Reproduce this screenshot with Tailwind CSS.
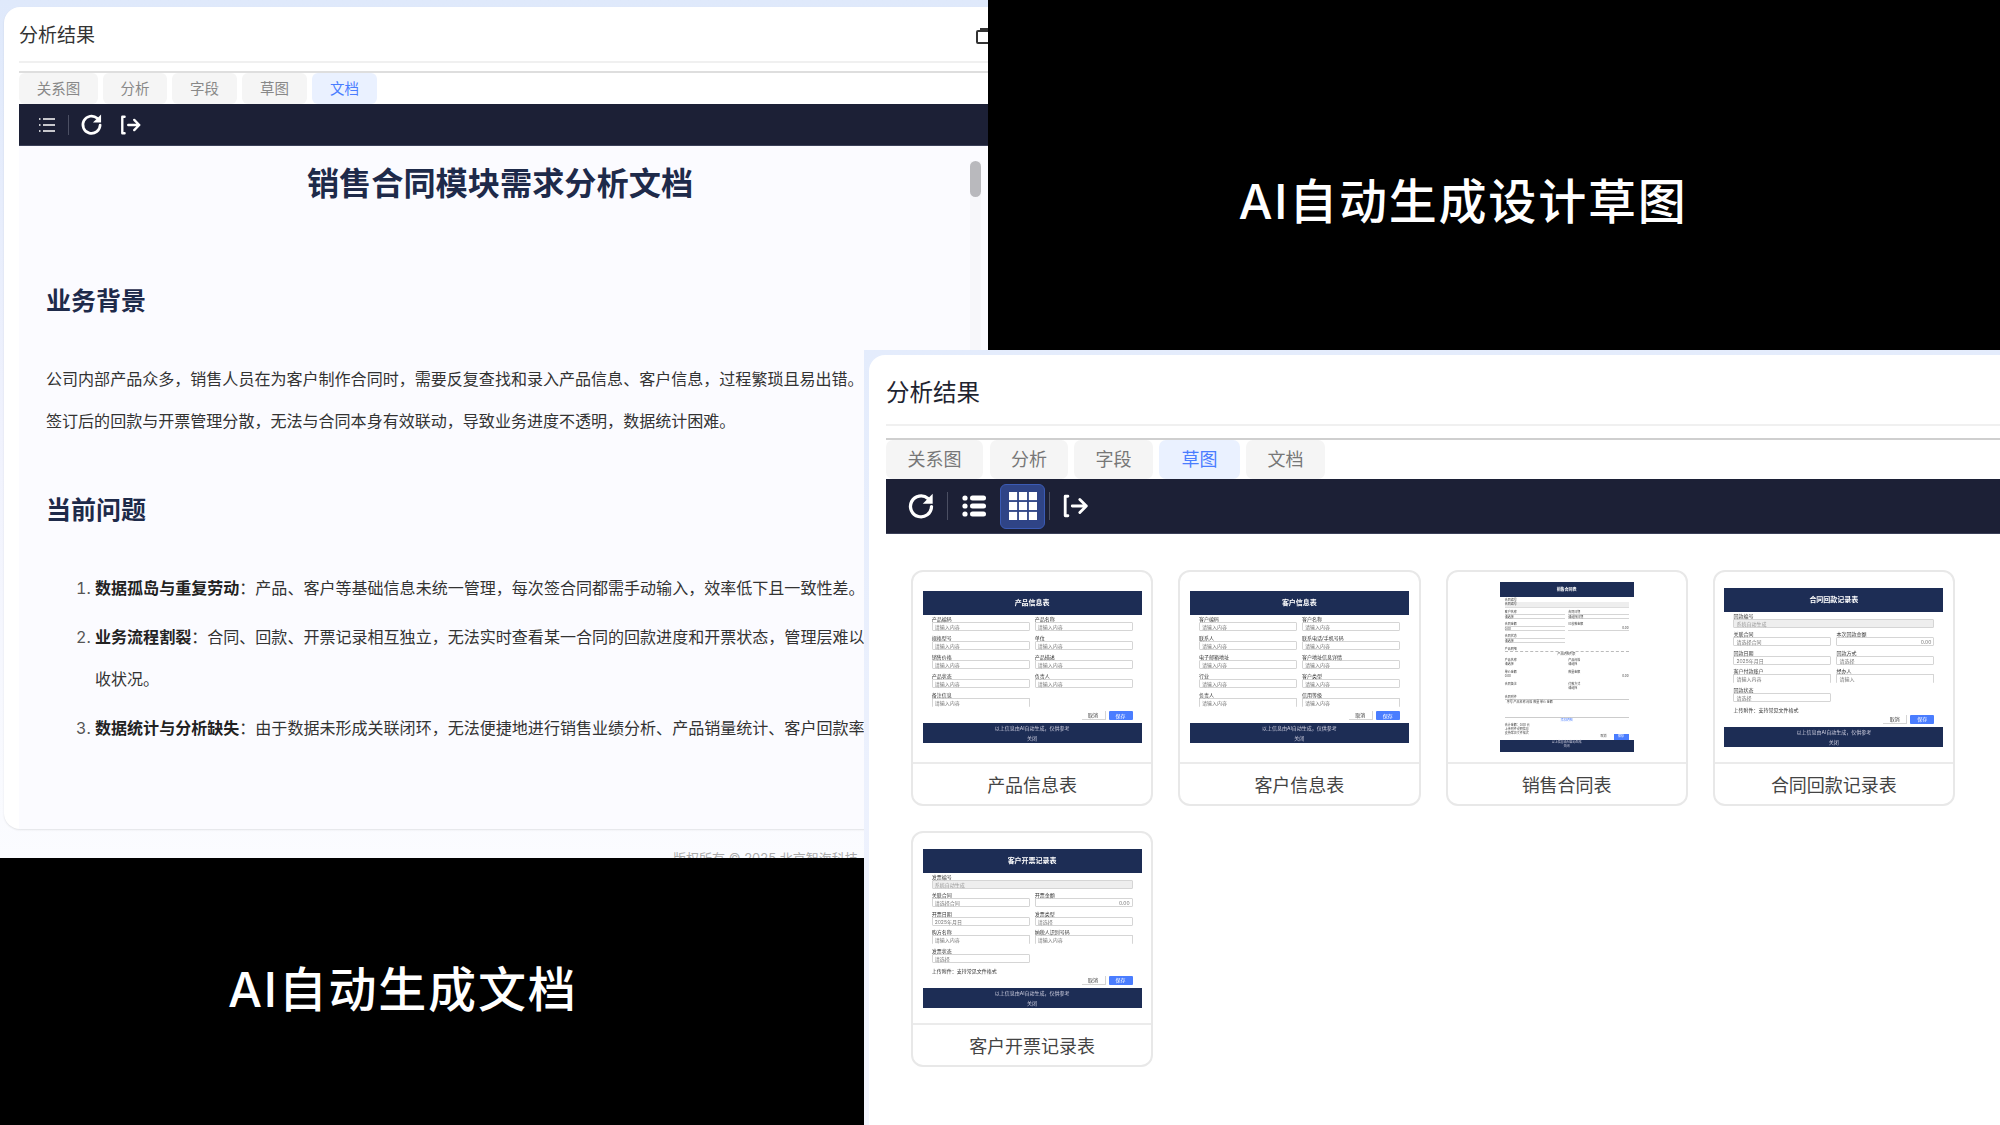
<!DOCTYPE html>
<html lang="zh-CN">
<head>
<meta charset="utf-8">
<title>AI</title>
<script src="https://cdn.jsdelivr.net/npm/@tailwindcss/browser@4"></script>
</head>
<body class="m-0 bg-black">
<div class="relative w-[2000px] h-[1125px] overflow-hidden bg-black font-['Inter','Noto_Sans_CJK_SC',sans-serif]">

<!-- left window -->
<section class="absolute left-0 top-0 w-[988px] h-[858px] overflow-hidden bg-linear-to-b from-[#dfe9fb] via-[#f0f2fd] to-[#fbfcff] pt-[7px] pl-[4px]">
  <div class="h-[822px] w-[1000px] rounded-[16px] bg-white pl-[15px] shadow-[0_1px_2px_rgba(0,0,0,0.1)] flex flex-col">
    <div class="h-[56px] border-b-2 border-[#f0f0f0] flex items-center text-[19px] text-[#333] shrink-0 relative">
      <span class="mt-[5px]">分析结果</span>
      <svg class="absolute left-[957px] top-[21px]" width="14" height="16" viewBox="0 0 14 16" fill="none" stroke="#333" stroke-width="2"><rect x="1" y="3" width="12" height="12" rx="1"/><path d="M4 1h9"/></svg>
    </div>
    <div class="mt-[8px] border-t-2 border-[#dedede] flex gap-[5px] h-[33px] text-[14.5px] text-[#888] shrink-0">
      <div class="w-[79px] h-[31px] flex items-center justify-center bg-[#f5f5f5] rounded-[6px]">关系图</div>
      <div class="w-[64px] h-[31px] flex items-center justify-center bg-[#f5f5f5] rounded-[6px]">分析</div>
      <div class="w-[65px] h-[31px] flex items-center justify-center bg-[#f5f5f5] rounded-[6px]">字段</div>
      <div class="w-[65px] h-[31px] flex items-center justify-center bg-[#f5f5f5] rounded-[6px]">草图</div>
      <div class="w-[65px] h-[31px] flex items-center justify-center bg-[#eaf1ff] rounded-[6px] text-[#4a7dff]">文档</div>
    </div>
    <div class="h-[42px] bg-[#1c2036] flex items-center shrink-0 border-b border-[#3b4058]">
      <svg class="ml-[19px]" width="18" height="18" viewBox="0 0 18 18" fill="none" stroke="#fff" stroke-width="1.6"><path d="M5 3h12M5 9h12M5 15h12M1 3h1.5M1 9h1.5M1 15h1.5"/></svg>
      <span class="ml-[12px] w-px h-[20px] bg-[#4b4f63]"></span>
      <svg class="ml-[11px]" width="23" height="23" viewBox="0 0 24 24" fill="none" stroke="#fff" stroke-width="2.8" stroke-linecap="round"><path d="M21 12.5A9 9 0 1 1 18 5.6"/><path d="M22 1.5v8.5h-8.5z" fill="#fff" stroke="none"/></svg>
      <svg class="ml-[17px]" width="22" height="22" viewBox="0 0 24 24" fill="none" stroke="#fff" stroke-width="2.6" stroke-linecap="round" stroke-linejoin="round"><path d="M5 3H2.5v18H5"/><path d="M9 12h12M15.5 6.5L21 12l-5.500 5.500"/></svg>
    </div>
    <div class="relative flex-1 bg-[#fbfbff] pl-[27px] text-[16.05px] text-[#333] overflow-hidden">
      <div class="absolute left-[951px] top-[15px] w-[11px] h-[574px] bg-[#f7f7fa]"><div class="h-[36px] rounded-full bg-[#b9b9bd]"></div></div>
      <h1 class="w-[962px] -ml-[27px] mt-[16px] h-[44px] leading-[44px] text-center text-[32.2px] font-bold text-[#1e2a4a] whitespace-nowrap">销售合同模块需求分析文档</h1>
      <h2 class="mt-[77px] h-[36px] leading-[36px] text-[25px] font-bold text-[#1e2a4a]">业务背景</h2>
      <p class="mt-[39px] leading-[42px] whitespace-nowrap">公司内部产品众多，销售人员在为客户制作合同时，需要反复查找和录入产品信息、客户信息，过程繁琐且易出错。</p>
      <p class="leading-[42px] whitespace-nowrap">签订后的回款与开票管理分散，无法与合同本身有效联动，导致业务进度不透明，数据统计困难。</p>
      <h2 class="mt-[50px] h-[36px] leading-[36px] text-[25px] font-bold text-[#1e2a4a]">当前问题</h2>
      <ol class="mt-[39px] pl-[49px] list-decimal whitespace-nowrap marker:text-[#555]">
        <li class="leading-[42px]"><strong class="text-[#222]">数据孤岛与重复劳动</strong>：产品、客户等基础信息未统一管理，每次签合同都需手动输入，效率低下且一致性差。</li>
        <li class="mt-[7px] leading-[42px]"><strong class="text-[#222]">业务流程割裂</strong>：合同、回款、开票记录相互独立，无法实时查看某一合同的回款进度和开票状态，管理层难以掌握整体回<br>收状况。</li>
        <li class="mt-[7px] leading-[42px]"><strong class="text-[#222]">数据统计与分析缺失</strong>：由于数据未形成关联闭环，无法便捷地进行销售业绩分析、产品销量统计、客户回款率等</li>
      </ol>
    </div>
  </div>
  <div class="absolute left-[673px] top-[853px] text-[13px] leading-[10px] text-[#aaa] whitespace-nowrap">版权所有 © 2025 北京智海科技</div>
</section>

<!-- top right black caption -->
<div class="absolute left-[988px] top-0 w-[1012px] h-[350px] bg-black flex items-center justify-center text-white text-[48px] font-medium tracking-[1.8px] pt-[54px] pr-[62px]">
  <span>AI自动生成设计草图</span>
</div>

<!-- bottom left black caption -->
<div class="absolute left-0 top-[858px] w-[864px] h-[267px] bg-black text-white text-[48px] font-medium tracking-[1.8px] flex items-center pl-[228px] pb-[4px]">
  <span class="whitespace-nowrap">AI自动生成文档</span>
</div>

<!-- right window -->
<section class="absolute left-[864px] top-[350px] w-[1136px] h-[775px] bg-linear-to-b from-[#e4ecfc] to-[#f3f5fe] pt-[5px] pl-[5px]">
  <div class="h-[790px] w-[1160px] rounded-[16px] bg-white pl-[17px] flex flex-col">
    <div class="h-[71px] border-b-2 border-[#f0f0f0] flex items-center text-[23.5px] text-[#1f2430] shrink-0"><span class="mt-[7px]">分析结果</span></div>
    <div class="mt-[12px] border-t-2 border-[#cfcfcf] flex h-[41px] text-[18px] text-[#777] shrink-0">
      <div class="w-[97px] h-[39px] ml-0 flex items-center justify-center bg-[#f5f5f5] rounded-[7px]">关系图</div>
      <div class="w-[78px] h-[39px] ml-[7px] flex items-center justify-center bg-[#f5f5f5] rounded-[7px]">分析</div>
      <div class="w-[79px] h-[39px] ml-[6px] flex items-center justify-center bg-[#f5f5f5] rounded-[7px]">字段</div>
      <div class="w-[81px] h-[39px] ml-[6px] flex items-center justify-center bg-[#eaf1ff] rounded-[7px] text-[#4a7dff]">草图</div>
      <div class="w-[79px] h-[39px] ml-[6px] flex items-center justify-center bg-[#f5f5f5] rounded-[7px]">文档</div>
    </div>
    <div class="h-[55px] bg-[#1c2036] flex items-center shrink-0 border-b border-[#3b4058]">
      <svg class="ml-[21px]" width="28" height="28" viewBox="0 0 24 24" fill="none" stroke="#fff" stroke-width="2.8" stroke-linecap="round"><path d="M21 12.5A9 9 0 1 1 18 5.6"/><path d="M22 1.500v8.500h-8.500z" fill="#fff" stroke="none"/></svg>
      <span class="ml-[12px] w-px h-[28px] bg-[#4b4f63]"></span>
      <svg class="ml-[13px]" width="26" height="24" viewBox="0 0 26 24" fill="#fff"><circle cx="4" cy="4" r="2.6"/><circle cx="4" cy="12" r="2.6"/><circle cx="4" cy="20" r="2.6"/><rect x="9" y="1.500" width="16" height="5" rx="2.500"/><rect x="9" y="9.500" width="16" height="5" rx="2.500"/><rect x="9" y="17.500" width="16" height="5" rx="2.500"/></svg>
      <div class="ml-[13px] w-[45px] h-[45px] rounded-[6px] bg-[#2f4486] border border-[#3b5bb5] flex items-center justify-center">
        <svg width="28" height="28" viewBox="0 0 29 29" fill="#fff"><rect x="0" y="0" width="8.400" height="8.400"/><rect x="10.300" y="0" width="8.400" height="8.400"/><rect x="20.600" y="0" width="8.400" height="8.400"/><rect x="0" y="10.300" width="8.400" height="8.400"/><rect x="10.300" y="10.300" width="8.400" height="8.400"/><rect x="20.600" y="10.300" width="8.400" height="8.400"/><rect x="0" y="20.600" width="8.400" height="8.400"/><rect x="10.300" y="20.600" width="8.400" height="8.400"/><rect x="20.600" y="20.600" width="8.400" height="8.400"/></svg>
      </div>
      <span class="ml-[4px] w-px h-[28px] bg-[#4b4f63]"></span>
      <svg class="ml-[12px]" width="27" height="26" viewBox="0 0 24 24" fill="none" stroke="#fff" stroke-width="2.6" stroke-linecap="round" stroke-linejoin="round"><path d="M5 3H2.500v18H5"/><path d="M9 12h13M16 6l6 6-6 6"/></svg>
    </div>

    <div class="ml-[25px] mt-[36px] w-[1044px] grid grid-cols-4 gap-x-[25px] gap-y-[25px] text-[18px] text-[#444]">

      <!-- card 1 -->
      <article class="h-[236px] rounded-[12px] border-2 border-[#e8e8e8] bg-white flex flex-col overflow-hidden">
        <div class="h-[192px] border-b-2 border-[#ebebeb] flex items-center justify-center">
          <div class="w-[219px] h-[152px] flex flex-col text-[5px] leading-[6px] text-[#333] blur-[0.35px]">
            <div class="h-[24px] bg-[#1d2d55] text-white flex items-center justify-center text-[7px] font-bold">产品信息表</div>
            <div class="grid grid-cols-2 gap-x-[5px] px-[9px] pt-[1px] flex-1">
              <div class="h-[18.6px]">产品编码<div class="h-[9px] border-[#d5d5d5] border rounded-[1px] pl-[2px] leading-[8px] text-[#777]">请输入内容</div></div>
              <div class="h-[18.6px]">产品名称<div class="h-[9px] border-[#d5d5d5] border rounded-[1px] pl-[2px] leading-[8px] text-[#777]">请输入内容</div></div>
              <div class="h-[18.6px]">规格型号<div class="h-[9px] border-[#d5d5d5] border rounded-[1px] pl-[2px] leading-[8px] text-[#777]">请输入内容</div></div>
              <div class="h-[18.6px]">单位<div class="h-[9px] border-[#d5d5d5] border rounded-[1px] pl-[2px] leading-[8px] text-[#777]">请输入内容</div></div>
              <div class="h-[18.6px]">销售价格<div class="h-[9px] border-[#d5d5d5] border rounded-[1px] pl-[2px] leading-[8px] text-[#777]">请输入内容</div></div>
              <div class="h-[18.6px]">产品描述<div class="h-[9px] border-[#d5d5d5] border rounded-[1px] pl-[2px] leading-[8px] text-[#777]">请输入内容</div></div>
              <div class="h-[18.6px]">产品状态<div class="h-[9px] border-[#d5d5d5] border rounded-[1px] pl-[2px] leading-[8px] text-[#777]">请输入内容</div></div>
              <div class="h-[18.6px]">负责人<div class="h-[9px] border-[#d5d5d5] border rounded-[1px] pl-[2px] leading-[8px] text-[#777]">请输入内容</div></div>
              <div class="h-[18.6px]">备注信息<div class="h-[9px] border-[#d5d5d5] border border-b-0 rounded-[1px] pl-[2px] leading-[8px] text-[#777]">请输入内容</div></div>
            </div>
            <div class="flex justify-end gap-[3px] px-[9px] h-[12px]">
              <div class="w-[24px] h-[9px] border-r border-b border-[#d5d5d5] flex items-center justify-center">取消</div>
              <div class="w-[24px] h-[9px] bg-[#4a7dff] rounded-[1px] text-white flex items-center justify-center">保存</div>
            </div>
            <div class="h-[20px] bg-[#1d2d55] text-[#ccd] text-center flex flex-col justify-around">
              <div>以上信息由AI自动生成，仅供参考</div><div>关闭</div>
            </div>
          </div>
        </div>
        <div class="flex-1 flex items-center justify-center pt-[3px]">产品信息表</div>
      </article>

      <!-- card 2 -->
      <article class="h-[236px] rounded-[12px] border-2 border-[#e8e8e8] bg-white flex flex-col overflow-hidden">
        <div class="h-[192px] border-b-2 border-[#ebebeb] flex items-center justify-center">
          <div class="w-[219px] h-[152px] flex flex-col text-[5px] leading-[6px] text-[#333] blur-[0.35px]">
            <div class="h-[24px] bg-[#1d2d55] text-white flex items-center justify-center text-[7px] font-bold">客户信息表</div>
            <div class="grid grid-cols-2 gap-x-[5px] px-[9px] pt-[1px] flex-1">
              <div class="h-[18.6px]">客户编码<div class="h-[9px] border-[#d5d5d5] border rounded-[1px] pl-[2px] leading-[8px] text-[#777]">请输入内容</div></div>
              <div class="h-[18.6px]">客户名称<div class="h-[9px] border-[#d5d5d5] border rounded-[1px] pl-[2px] leading-[8px] text-[#777]">请输入内容</div></div>
              <div class="h-[18.6px]">联系人<div class="h-[9px] border-[#d5d5d5] border rounded-[1px] pl-[2px] leading-[8px] text-[#777]">请输入内容</div></div>
              <div class="h-[18.6px]">联系电话/手机号码<div class="h-[9px] border-[#d5d5d5] border rounded-[1px] pl-[2px] leading-[8px] text-[#777]">请输入内容</div></div>
              <div class="h-[18.6px]">电子邮箱地址<div class="h-[9px] border-[#d5d5d5] border rounded-[1px] pl-[2px] leading-[8px] text-[#777]">请输入内容</div></div>
              <div class="h-[18.6px]">客户地址信息详情<div class="h-[9px] border-[#d5d5d5] border rounded-[1px] pl-[2px] leading-[8px] text-[#777]">请输入内容</div></div>
              <div class="h-[18.6px]">行业<div class="h-[9px] border-[#d5d5d5] border rounded-[1px] pl-[2px] leading-[8px] text-[#777]">请输入内容</div></div>
              <div class="h-[18.6px]">客户类型<div class="h-[9px] border-[#d5d5d5] border rounded-[1px] pl-[2px] leading-[8px] text-[#777]">请输入内容</div></div>
              <div class="h-[18.6px]">负责人<div class="h-[9px] border-[#d5d5d5] border border-b-0 rounded-[1px] pl-[2px] leading-[8px] text-[#777]">请输入内容</div></div>
              <div class="h-[18.6px]">信用等级<div class="h-[9px] border-[#d5d5d5] border border-b-0 rounded-[1px] pl-[2px] leading-[8px] text-[#777]">请输入内容</div></div>
            </div>
            <div class="flex justify-end gap-[3px] px-[9px] h-[12px]">
              <div class="w-[24px] h-[9px] border-r border-b border-[#d5d5d5] flex items-center justify-center">取消</div>
              <div class="w-[24px] h-[9px] bg-[#4a7dff] rounded-[1px] text-white flex items-center justify-center">保存</div>
            </div>
            <div class="h-[20px] bg-[#1d2d55] text-[#ccd] text-center flex flex-col justify-around">
              <div>以上信息由AI自动生成，仅供参考</div><div>关闭</div>
            </div>
          </div>
        </div>
        <div class="flex-1 flex items-center justify-center pt-[3px]">客户信息表</div>
      </article>

      <!-- card 3 -->
      <article class="h-[236px] rounded-[12px] border-2 border-[#e8e8e8] bg-white flex flex-col overflow-hidden">
        <div class="h-[192px] border-b-2 border-[#ebebeb] flex items-center justify-center">
          <div class="w-[134px] h-[170px] flex flex-col text-[3px] leading-[4px] text-[#444] blur-[0.35px]">
            <div class="h-[15px] bg-[#1d2d55] text-white flex items-center justify-center text-[4px] font-bold">销售合同表</div>
            <div class="px-[5px] pt-[1px] flex-1">
              <div>合同编号<div class="h-[6px] bg-[#eee] border-b border-[#ddd]">合同编号</div></div>
              <div class="grid grid-cols-2 gap-x-[3px] mt-[2px]">
                <div class="h-[12px]">客户名称<div class="h-[5px] border-y border-[#d5d5d5]">请选择</div></div>
                <div class="h-[12px]">合同日期<div class="h-[5px] border-y border-[#d5d5d5]">请选择日期</div></div>
                <div class="h-[12px]">合同金额<div class="h-[5px] border-y border-[#d5d5d5]">0.00</div></div>
                <div class="h-[12px]">已收款金额<div class="h-[5px] border-b border-[#d5d5d5] text-right">0.00</div></div>
                <div class="h-[12px]">合同状态<div class="h-[5px] border-y border-[#d5d5d5]">请选择</div></div>
              </div>
              <div class="mt-[1px]">产品明细<div class="h-0 border-t border-dashed border-[#bbb]"></div></div>
              <div class="text-center">产品明细列表</div>
              <div class="grid grid-cols-2 gap-x-[3px] mt-[2px]">
                <div class="h-[12px]">产品名称<div>请选择</div></div>
                <div class="h-[12px]">产品规格<div>请选择</div></div>
                <div class="h-[12px]">单价金额<div>0.00</div></div>
                <div class="h-[12px]">数量金额<div class="text-right">0.00</div></div>
                <div class="h-[12px]">合同备注</div>
                <div class="h-[12px]">付款方式<div>请选择</div></div>
              </div>
              <div class="mt-[1px]">合同附件</div>
              <div class="h-[19px] border-y border-[#ccc]"><span class="pl-[2px]">序号 产品名称 规格 数量 单价 金额</span></div>
              <div class="text-center text-[#4a7dff]">添加明细</div>
              <div class="mt-[1px]">合计金额：0.00 元<br>上传附件说明信息<br>支持常见文件格式</div>
              <div class="flex justify-end gap-[3px] -mt-[1px]">
                <div class="w-[14px] h-[5px] text-center">取消</div>
                <div class="w-[15px] h-[6px] bg-[#4a7dff] text-white text-center">保存</div>
              </div>
            </div>
            <div class="h-[12px] bg-[#1d2d55] text-[#ccd] text-center">以上信息由AI自动生成<br>关闭</div>
          </div>
        </div>
        <div class="flex-1 flex items-center justify-center pt-[3px]">销售合同表</div>
      </article>

      <!-- card 4 -->
      <article class="h-[236px] rounded-[12px] border-2 border-[#e8e8e8] bg-white flex flex-col overflow-hidden">
        <div class="h-[192px] border-b-2 border-[#ebebeb] flex items-center justify-center">
          <div class="w-[219px] h-[159px] flex flex-col text-[5px] leading-[6px] text-[#333] blur-[0.35px]">
            <div class="h-[24px] bg-[#1d2d55] text-white flex items-center justify-center text-[7px] font-bold">合同回款记录表</div>
            <div class="px-[9px] pt-[1px] flex-1">
              <div class="h-[18.6px]">回款编号<div class="h-[9px] bg-[#eee] border border-[#d5d5d5] rounded-[1px] pl-[2px] leading-[8px] text-[#999]">系统自动生成</div></div>
              <div class="grid grid-cols-2 gap-x-[5px]">
                <div class="h-[18.6px]">关联合同<div class="h-[9px] border-[#d5d5d5] border rounded-[1px] pl-[2px] leading-[8px] text-[#777]">请选择合同</div></div>
                <div class="h-[18.6px]">本次回款金额<div class="h-[9px] border-[#d5d5d5] border rounded-[1px] pr-[2px] leading-[8px] text-[#777] text-right">0.00</div></div>
                <div class="h-[18.6px]">回款日期<div class="h-[9px] border-[#d5d5d5] border rounded-[1px] pl-[2px] leading-[8px] text-[#777]">2025年月日</div></div>
                <div class="h-[18.6px]">回款方式<div class="h-[9px] border-[#d5d5d5] border rounded-[1px] pl-[2px] leading-[8px] text-[#777]">请选择</div></div>
                <div class="h-[18.6px]">客户付款账户<div class="h-[9px] border-[#d5d5d5] border border-b-0 rounded-[1px] pl-[2px] leading-[8px] text-[#777]">请输入内容</div></div>
                <div class="h-[18.6px]">经办人<div class="h-[9px] border-[#d5d5d5] border border-b-0 rounded-[1px] pl-[2px] leading-[8px] text-[#777]">请输入</div></div>
                <div class="h-[18.6px]">回款状态<div class="h-[9px] border-[#d5d5d5] border rounded-[1px] pl-[2px] leading-[8px] text-[#777]">请选择</div></div>
              </div>
              <div class="mt-[2px]">上传附件：支持常见文件格式</div>
            </div>
            <div class="flex justify-end gap-[3px] px-[9px] h-[12px] -mt-[3px]">
              <div class="w-[24px] h-[9px] border-r border-b border-[#d5d5d5] flex items-center justify-center">取消</div>
              <div class="w-[24px] h-[9px] bg-[#4a7dff] rounded-[1px] text-white flex items-center justify-center">保存</div>
            </div>
            <div class="h-[20px] bg-[#1d2d55] text-[#ccd] text-center flex flex-col justify-around">
              <div>以上信息由AI自动生成，仅供参考</div><div>关闭</div>
            </div>
          </div>
        </div>
        <div class="flex-1 flex items-center justify-center pt-[3px]">合同回款记录表</div>
      </article>

      <!-- card 5 -->
      <article class="h-[236px] rounded-[12px] border-2 border-[#e8e8e8] bg-white flex flex-col overflow-hidden">
        <div class="h-[192px] border-b-2 border-[#ebebeb] flex items-center justify-center">
          <div class="w-[219px] h-[159px] flex flex-col text-[5px] leading-[6px] text-[#333] blur-[0.35px]">
            <div class="h-[24px] bg-[#1d2d55] text-white flex items-center justify-center text-[7px] font-bold">客户开票记录表</div>
            <div class="px-[9px] pt-[1px] flex-1">
              <div class="h-[18.6px]">发票编号<div class="h-[9px] bg-[#eee] border border-[#d5d5d5] rounded-[1px] pl-[2px] leading-[8px] text-[#999]">系统自动生成</div></div>
              <div class="grid grid-cols-2 gap-x-[5px]">
                <div class="h-[18.6px]">关联合同<div class="h-[9px] border-[#d5d5d5] border rounded-[1px] pl-[2px] leading-[8px] text-[#777]">请选择合同</div></div>
                <div class="h-[18.6px]">开票金额<div class="h-[9px] border-[#d5d5d5] border rounded-[1px] pr-[2px] leading-[8px] text-[#777] text-right">0.00</div></div>
                <div class="h-[18.6px]">开票日期<div class="h-[9px] border-[#d5d5d5] border rounded-[1px] pl-[2px] leading-[8px] text-[#777]">2025年月日</div></div>
                <div class="h-[18.6px]">发票类型<div class="h-[9px] border-[#d5d5d5] border rounded-[1px] pl-[2px] leading-[8px] text-[#777]">请选择</div></div>
                <div class="h-[18.6px]">购方名称<div class="h-[9px] border-[#d5d5d5] border border-b-0 rounded-[1px] pl-[2px] leading-[8px] text-[#777]">请输入内容</div></div>
                <div class="h-[18.6px]">纳税人识别号码<div class="h-[9px] border-[#d5d5d5] border border-b-0 rounded-[1px] pl-[2px] leading-[8px] text-[#777]">请输入内容</div></div>
                <div class="h-[18.6px]">发票状态<div class="h-[9px] border-[#d5d5d5] border rounded-[1px] pl-[2px] leading-[8px] text-[#777]">请选择</div></div>
              </div>
              <div class="mt-[2px]">上传附件：支持常见文件格式</div>
            </div>
            <div class="flex justify-end gap-[3px] px-[9px] h-[12px] -mt-[3px]">
              <div class="w-[24px] h-[9px] border-r border-b border-[#d5d5d5] flex items-center justify-center">取消</div>
              <div class="w-[24px] h-[9px] bg-[#4a7dff] rounded-[1px] text-white flex items-center justify-center">保存</div>
            </div>
            <div class="h-[20px] bg-[#1d2d55] text-[#ccd] text-center flex flex-col justify-around">
              <div>以上信息由AI自动生成，仅供参考</div><div>关闭</div>
            </div>
          </div>
        </div>
        <div class="flex-1 flex items-center justify-center pt-[3px]">客户开票记录表</div>
      </article>
    </div>
  </div>
</section>
</div>
</body>
</html>
